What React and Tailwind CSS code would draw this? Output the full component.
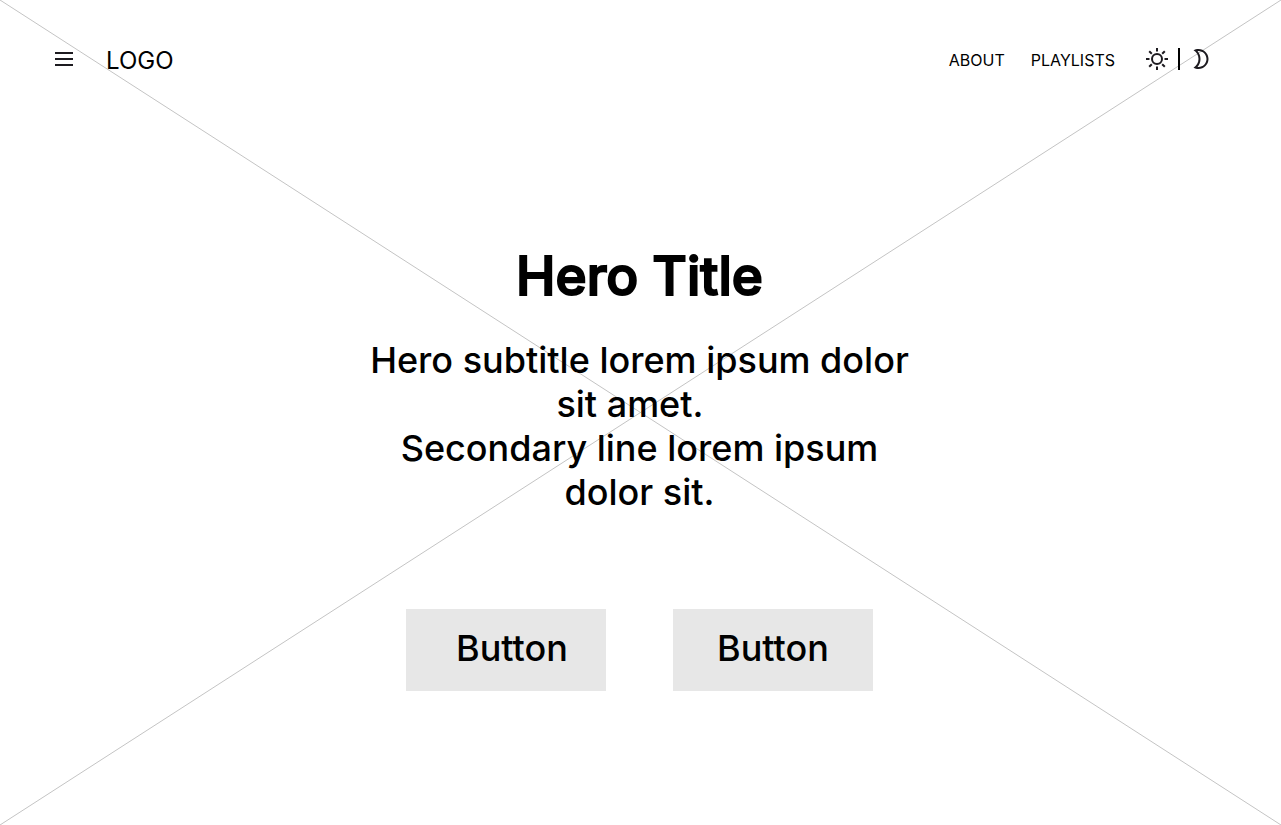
function MenuIcon() {
  return (
    <svg viewBox="0 0 24 24" className="size-6" fill="#1D1B20" aria-hidden="true">
      <path d="M3 19v-2h18v2H3Zm0-6v-2h18v2H3Zm0-6V5h18v2H3Z" />
    </svg>
  );
}

function SunIcon() {
  return (
    <svg viewBox="0 0 24 24" className="size-6" fill="none" stroke="#1D1B20" strokeWidth="2" aria-hidden="true">
      <circle cx="12" cy="12" r="5" />
      <path d="M12 1v3.5M12 19.5v3.5M1 12h3.5M19.5 12h3.5M4.2 4.2l2.6 2.6M17.2 17.2l2.6 2.6M4.2 19.8l2.6-2.6M17.2 6.8l2.6-2.6" />
    </svg>
  );
}

function MoonIcon() {
  return (
    <svg viewBox="0 0 24 24" className="size-6" fill="#1D1B20" aria-hidden="true">
      <path d="M9.5 4c4.41 0 8 3.59 8 8s-3.59 8-8 8c-.34 0-.68-.02-1.01-.07C10.4 17.74 11.5 14.94 11.5 12s-1.1-5.74-3.01-7.93C8.82 4.02 9.16 4 9.5 4m0-2c-1.82 0-3.53.5-5 1.35 2.99 1.73 5 4.95 5 8.65s-2.01 6.92-5 8.65c1.47.85 3.18 1.35 5 1.35 5.52 0 10-4.48 10-10S15.02 2 9.5 2Z" />
    </svg>
  );
}

export default function App() {
  return (
    <div className="relative isolate flex min-h-screen flex-col bg-white font-['Inter',sans-serif] text-black">
      <svg className="absolute inset-0 -z-10 size-full" aria-hidden="true">
        <line x1="0" y1="0" x2="100%" y2="100%" stroke="#C4C4C4" />
        <line x1="0" y1="100%" x2="100%" y2="0" stroke="#C4C4C4" />
      </svg>

      <header className="flex items-center justify-between pt-[41px] pr-17 pl-13">
        <div className="flex items-center gap-[30px]">
          <button type="button" aria-label="Menu">
            <MenuIcon />
          </button>
          <a href="#" className="pt-1 text-2xl">LOGO</a>
        </div>
        <div className="flex items-center gap-[30px]">
          <nav className="flex gap-[26px] pt-0.5">
            <a href="#about">ABOUT</a>
            <a href="#playlists">PLAYLISTS</a>
          </nav>
          <div className="flex items-center gap-[9px]">
            <button type="button" aria-label="Light mode">
              <SunIcon />
            </button>
            <span className="h-[22px] w-0.5 bg-black" />
            <button type="button" aria-label="Dark mode">
              <MoonIcon />
            </button>
          </div>
        </div>
      </header>

      <main className="flex flex-col items-center pt-[163px] pr-0.5">
        <h1 className="text-[53px] leading-[72px] font-medium [-webkit-text-stroke:2px_black]">Hero Title</h1>
        <p className="mt-[26px] max-w-[560px] text-center text-4xl leading-11 font-medium">
          Hero subtitle lorem ipsum dolor sit amet.{"\u00a0\u00a0"}
          <br />
          Secondary line lorem ipsum dolor sit.
        </p>
        <div className="mt-[95px] flex gap-[67px]">
          <button type="button" className="h-[82px] w-[200px] bg-[#E7E7E7] pb-1 pl-3 text-4xl font-medium">Button</button>
          <button type="button" className="h-[82px] w-[200px] bg-[#E7E7E7] pb-1 text-4xl font-medium">Button</button>
        </div>
      </main>
    </div>
  );
}
